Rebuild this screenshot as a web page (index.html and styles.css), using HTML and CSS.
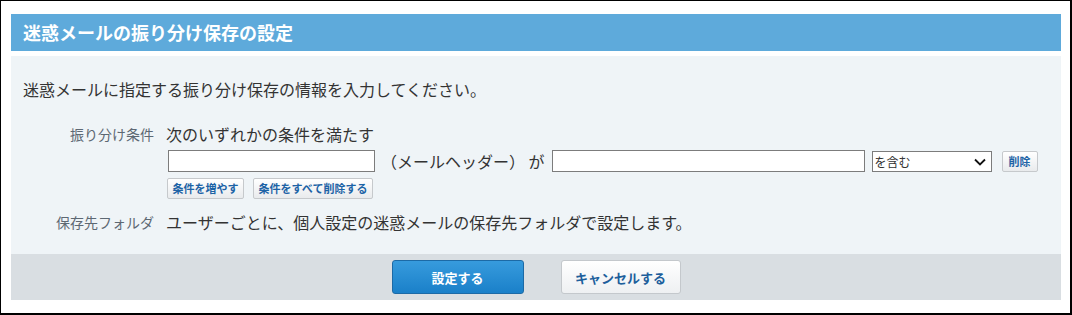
FILE: index.html
```html
<!DOCTYPE html>
<html lang="ja">
<head>
<meta charset="utf-8">
<link rel="stylesheet" href="styles.css">
</head>
<body>
<div class="frame">
  <div class="header">迷惑メールの振り分け保存の設定</div>
  <div class="content">
    <p class="desc">迷惑メールに指定する振り分け保存の情報を入力してください。</p>
    <div class="form">
      <div class="label">振り分け条件</div>
      <div class="value">
        <div class="line">次のいずれかの条件を満たす</div>
        <div class="cond-row">
          <input class="field field-header" type="text">
          <span class="cond-text">（メールヘッダー） が</span>
          <input class="field field-value" type="text">
          <div class="select">
            <span class="select-text">を含む</span>
            <svg class="chevron" width="12" height="8" viewBox="0 0 12 8"><path d="M1 1.5 L6 6.5 L11 1.5" fill="none" stroke="#111" stroke-width="1.8"/></svg>
          </div>
          <button class="small-btn del-btn" type="button">削除</button>
        </div>
        <div class="btn-row">
          <button class="small-btn" type="button">条件を増やす</button>
          <button class="small-btn" type="button">条件をすべて削除する</button>
        </div>
      </div>
      <div class="label label-2">保存先フォルダ</div>
      <div class="value value-2">
        <div class="line">ユーザーごとに、個人設定の迷惑メールの保存先フォルダで設定します。</div>
      </div>
    </div>
  </div>
  <div class="footer">
    <button class="btn-primary" type="button">設定する</button>
    <button class="btn-secondary" type="button">キャンセルする</button>
  </div>
</div>
</body>
</html>
```

FILE: styles.css
```css
* { box-sizing: border-box; }
html, body { margin: 0; padding: 0; background: #fff; }
body {
  font-family: "Noto Sans CJK JP", "Noto Sans", sans-serif;
  color: #333;
}
.frame {
  width: 1072px;
  height: 315px;
  border-left: 1px solid #000;
  border-top: 1px solid #000;
  border-right: 2px solid #000;
  border-bottom: 2px solid #000;
  padding: 13px 9px 0 10px;
}
.header {
  height: 37px;
  background: #5eaadb;
  color: #fff;
  font-weight: bold;
  font-size: 18px;
  line-height: 37px;
  padding-left: 12px;
}
.content {
  margin-top: 5px;
  background: #eff4f7;
  padding: 22px 12px 21px 12px;
}
.desc {
  margin: 0;
  font-size: 16px;
  line-height: 22px;
}
.form {
  margin-top: 23px;
  display: grid;
  grid-template-columns: 131px 1fr;
  column-gap: 12px;
}
.label {
  text-align: right;
  font-size: 14px;
  line-height: 22px;
  color: #5d6873;
}
.label-2, .value-2 { margin-top: 12px; }
.line {
  font-size: 16px;
  line-height: 22px;
  color: #333;
}
.cond-row {
  margin-top: 5px;
  display: flex;
  align-items: center;
  height: 22px;
}
.field {
  height: 22px;
  border: 1px solid #7c7c7c;
  background: #fff;
  margin: 0;
  padding: 0 3px;
}
.field-header { width: 207px; margin-left: 2px; }
.field-value { width: 313px; }
.cond-text {
  font-size: 16px;
  line-height: 22px;
  margin: 0 7px 0 6px;
  white-space: nowrap;
}
.select {
  position: relative;
  width: 120px;
  height: 21px;
  margin-left: 7px;
  border: 1px solid #7c7c7c;
  background: #fff;
  display: flex;
  align-items: center;
}
.select-text {
  font-size: 12px;
  color: #333;
  padding-left: 2px;
  line-height: 19px;
}
.chevron {
  position: absolute;
  right: 5px;
  top: 6px;
}
.small-btn {
  height: 21px;
  margin: 0;
  padding: 0 5px;
  font-family: inherit;
  font-size: 11px;
  font-weight: bold;
  color: #1d63a6;
  border: 1px solid #c6c9cc;
  border-radius: 2px;
  background: linear-gradient(#ffffff, #e9ebed);
  line-height: 19px;
  white-space: nowrap;
}
.del-btn {
  margin-left: 10px;
  width: 36px;
  padding: 0;
}
.btn-row {
  margin-top: 6px;
  display: flex;
  gap: 9px;
  padding-left: 1px;
}
.btn-row .small-btn:first-child { width: 77px; padding: 0; }
.btn-row .small-btn:last-child { width: 120px; padding: 0; }
.footer {
  background: #d9dee2;
  height: 46px;
  display: flex;
  justify-content: center;
  align-items: center;
  gap: 37px;
}
.btn-primary, .btn-secondary {
  height: 34px;
  margin: 0;
  font-family: inherit;
  font-size: 13px;
  font-weight: bold;
  border-radius: 3px;
}
.btn-primary {
  width: 132px;
  color: #fff;
  border: 1px solid #1c6aa6;
  background: linear-gradient(#379bdd, #1a80c9);
}
.btn-secondary {
  width: 120px;
  color: #1d5f9c;
  border: 1px solid #c4c8cc;
  background: linear-gradient(#ffffff, #eef0f2);
}
```
